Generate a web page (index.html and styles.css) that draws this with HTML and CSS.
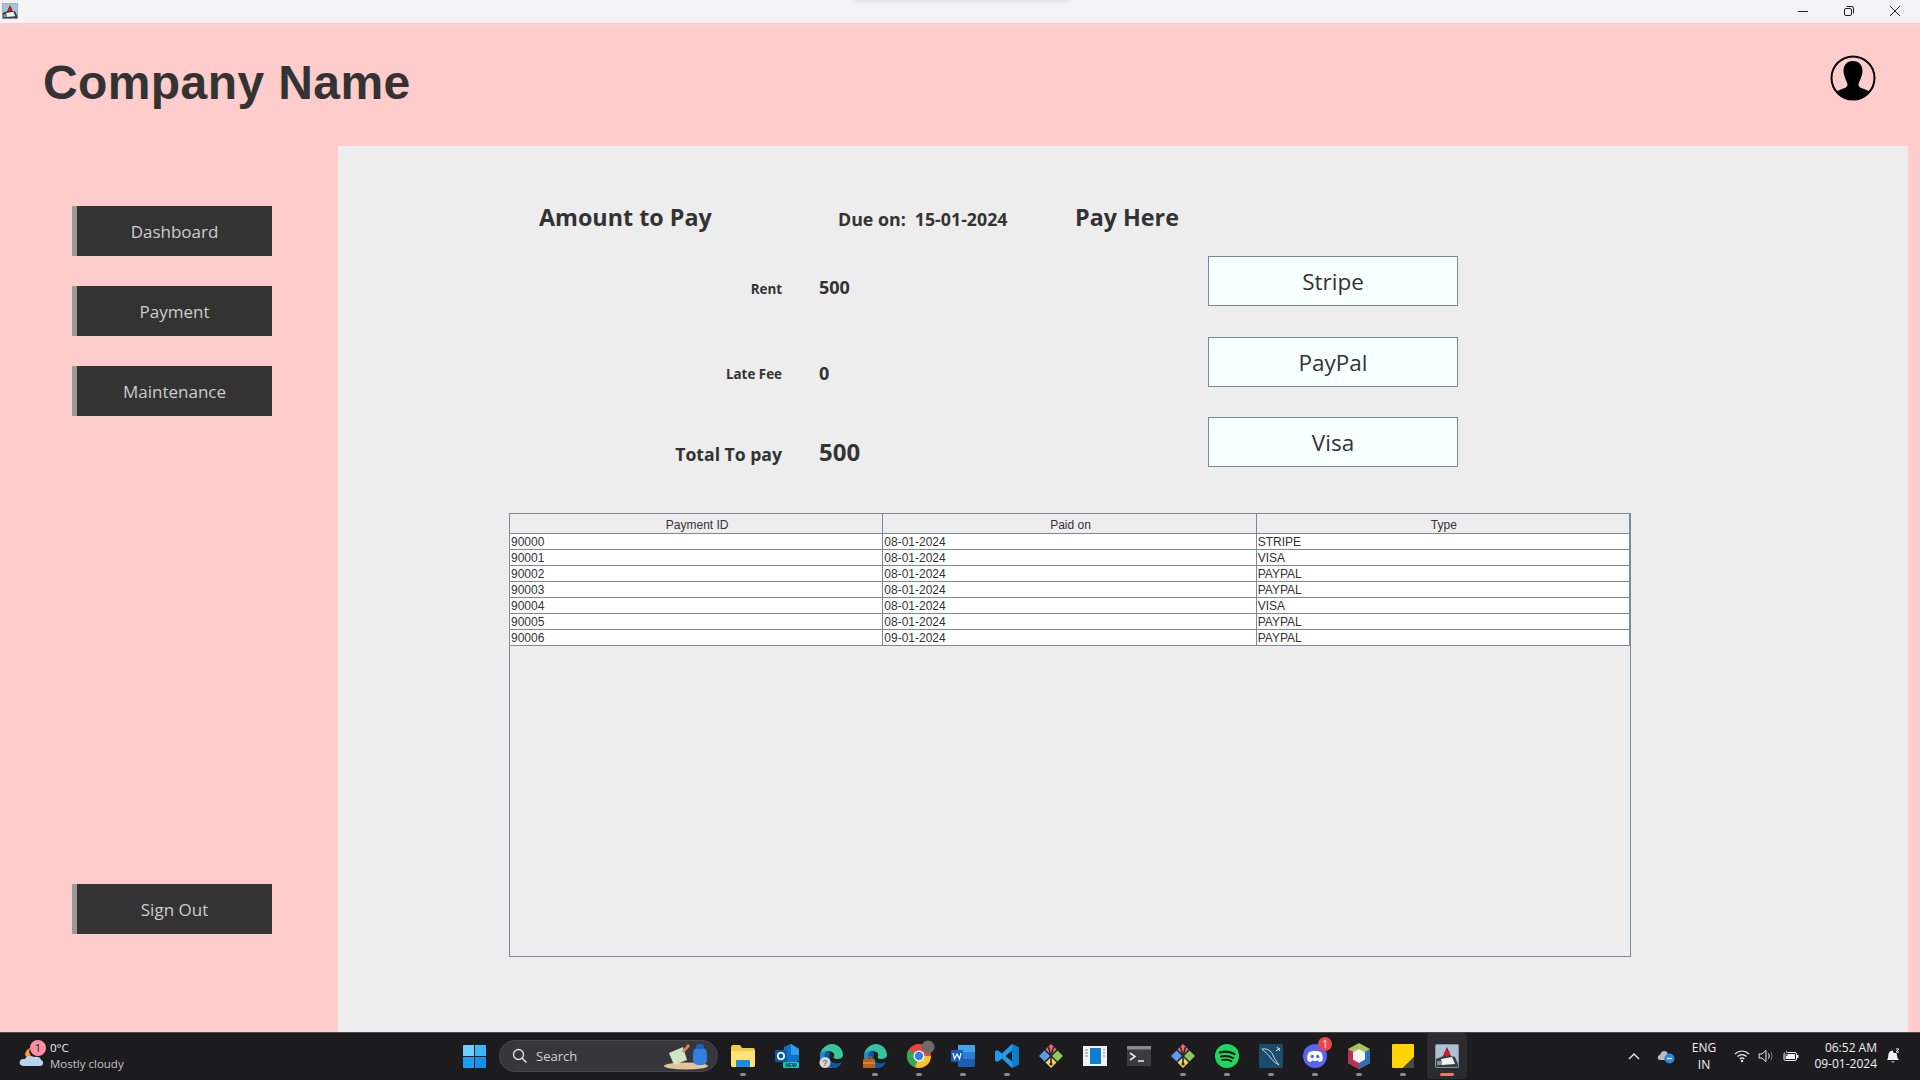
FILE: index.html
```html
<!DOCTYPE html>
<html lang="en">
<head>
    <meta charset="UTF-8">
    <meta name="viewport" content="width=device-width, initial-scale=1.0">
    <title>Company Name - Payment</title>
    <link rel="stylesheet" href="styles.css">
</head>
<body>
    <svg class="defs" width="0" height="0">
        <symbol id="duke" viewBox="0 0 24 24">
            <rect x="0.5" y="0.5" width="23" height="23" rx="1" fill="#aebfd2" stroke="#7f93a8"/>
            <path d="M8 12 L12 3 L16 12 L20 13 L23 20 L23 23 L1 23 L1 15 L6 13 Z" fill="#3a3d42"/>
            <path d="M6 15 L17 13 L20 20 L7 21 Z" fill="#eef0f2"/>
            <path d="M2 17 L7 17 L7 21 L2 21 Z" fill="#8c9198"/>
            <circle cx="12" cy="9.500" r="2.800" fill="#e8141c"/>
        </symbol>
        <symbol id="gem" viewBox="0 0 24 24">
            <path d="M5.500 6.500 L11 12 L5.500 17.500 L0 12 Z" fill="#5b9bf0"/>
            <path d="M18.500 6.500 L24 12 L18.500 17.500 L13 12 Z" fill="#8ccb5a"/>
            <path d="M12 13 L17.500 18.500 L12 24 L6.500 18.500 Z" fill="#f2d35c"/>
            <path d="M12 0 L17.500 5.500 L12 11 L6.500 5.500 Z" fill="#ee6a72"/>
            <path d="M9.500 3 L12 12 L12 20 M14.500 3 L12 12" stroke="#2b2b2b" stroke-width="1.600" fill="none"/>
            <circle cx="12" cy="20" r="1.600" fill="#2b2b2b"/>
        </symbol>
        <symbol id="edge" viewBox="0 0 24 24">
            <path d="M1 11 C2 4 8 0 13 0 C19 0 24 5 24 11 C24 14 21 15 18 15 C15 15 14 14 15 12 C16 10 14 7 9 7 C5 7 2 9 1 11 Z" fill="#35c6a0"/>
            <path d="M1 11 C2 8 6 6 9 7 C6 8 5 12 6 16 C7 20 11 23 15 24 C8 25 0 19 1 11 Z" fill="#1b8ad6"/>
            <path d="M6 13 C6 18 10 22 15 24 C18 24 21 22 23 18 C19 20 13 20 11 16 C10 13 12 9 9 7 C7 8 6 10 6 13 Z" fill="#0c59a4"/>
        </symbol>
    </svg>

    <div class="titlebar">
        <svg class="app-icon" width="16" height="16"><use href="#duke"/></svg>
        <div class="win-controls">
            <svg width="46" height="16" viewBox="0 0 46 16"><path d="M18 8.500 H28" stroke="#222" fill="none"/></svg>
            <svg width="46" height="16" viewBox="0 0 46 16"><rect x="18.500" y="5.500" width="7" height="7" rx="1.500" stroke="#222" fill="none"/><path d="M20.500 3.500 H26 Q27.500 3.500 27.500 5 V10.500" stroke="#222" fill="none"/></svg>
            <svg width="46" height="16" viewBox="0 0 46 16"><path d="M18 3 L28 13 M28 3 L18 13" stroke="#222" fill="none"/></svg>
        </div>
    </div>

    <div class="app">
        <header class="app-header">
            <h1>Company Name</h1>
            <svg class="avatar" width="46" height="46" viewBox="0 0 46 46">
                <defs><clipPath id="avatarClip"><circle cx="23" cy="23" r="21.500"/></clipPath></defs>
                <circle cx="23" cy="23" r="21.500" fill="none" stroke="#000" stroke-width="2"/>
                <path clip-path="url(#avatarClip)" d="M23 6 C29 6 32.500 10 32.500 16 C32.500 19 31.500 21 30.500 24 C29.800 26 28.500 28 28.500 30 C28.500 32 31 33 34 34 L41 37 L41 46 L5 46 L5 37 L12 34 C15 33 17.500 32 17.500 30 C17.500 28 16.200 26 15.500 24 C14.500 21 13.500 19 13.500 16 C13.500 10 17 6 23 6 Z" fill="#000"/>
            </svg>
        </header>

        <div class="app-body">
            <nav class="sidebar">
                <button class="nav-btn">Dashboard</button>
                <button class="nav-btn">Payment</button>
                <button class="nav-btn">Maintenance</button>
                <button class="nav-btn signout">Sign Out</button>
            </nav>

            <main class="panel">
                <div class="pay-head">
                    <div class="pay-title">Amount to Pay</div>
                    <div class="pay-due"><span>Due on:</span><span>15-01-2024</span></div>
                    <div class="pay-title">Pay Here</div>
                </div>

                <div class="pay-grid">
                    <div class="lbl lbl-rent">Rent</div>
                    <div class="val val-rent">500</div>
                    <button class="pay-btn">Stripe</button>

                    <div class="lbl lbl-late">Late Fee</div>
                    <div class="val val-late">0</div>
                    <button class="pay-btn">PayPal</button>

                    <div class="lbl lbl-total">Total To pay</div>
                    <div class="val val-total">500</div>
                    <button class="pay-btn">Visa</button>
                </div>

                <div class="table-box">
                    <table class="pay-table">
                        <thead>
                            <tr><th>Payment ID</th><th>Paid on</th><th>Type</th></tr>
                        </thead>
                        <tbody>
                            <tr><td>90000</td><td>08-01-2024</td><td>STRIPE</td></tr>
                            <tr><td>90001</td><td>08-01-2024</td><td>VISA</td></tr>
                            <tr><td>90002</td><td>08-01-2024</td><td>PAYPAL</td></tr>
                            <tr><td>90003</td><td>08-01-2024</td><td>PAYPAL</td></tr>
                            <tr><td>90004</td><td>08-01-2024</td><td>VISA</td></tr>
                            <tr><td>90005</td><td>08-01-2024</td><td>PAYPAL</td></tr>
                            <tr><td>90006</td><td>09-01-2024</td><td>PAYPAL</td></tr>
                        </tbody>
                    </table>
                </div>
            </main>
        </div>
    </div>

    <footer class="taskbar">
        <div class="weather">
            <div class="weather-icon">
                <svg width="26" height="26" viewBox="0 0 26 26">
                    <path d="M6 12 A8 8 0 0 0 14 15 A8 8 0 0 1 11 5 A8 8 0 0 0 6 12 Z" fill="#f2a13a"/>
                    <path d="M5 23 C1 23 0 20 1 18 C2 16 4 16 6 16 C7 13 12 12 15 14 C18 13 22 14 22 17 C25 18 25 23 21 23 Z" fill="#bcd3ee"/>
                </svg>
                <span class="weather-badge">1</span>
            </div>
            <div class="weather-text">
                <span class="temp">0°C</span>
                <span class="cond">Mostly cloudy</span>
            </div>
        </div>

        <div class="tb-slot">
            <svg width="23" height="23" viewBox="0 0 23 23">
                <path d="M0 1 Q0 0 1 0 H11 V11 H0 Z" fill="#6fd0fb"/>
                <path d="M12 0 H22 Q23 0 23 1 V11 H12 Z" fill="#3db8f6"/>
                <path d="M0 12 H11 V23 H1 Q0 23 0 22 Z" fill="#1a9ff0"/>
                <path d="M12 12 H23 V22 Q23 23 22 23 H12 Z" fill="#1291ea"/>
            </svg>
        </div>

        <div class="search">
            <svg width="16" height="16" viewBox="0 0 16 16"><circle cx="6.500" cy="6.500" r="5" stroke="#e4e4e4" stroke-width="1.300" fill="none"/><path d="M10 10 L14.500 14.500" stroke="#e4e4e4" stroke-width="1.500"/></svg>
            <span>Search</span>
            <svg class="search-art" width="46" height="28" viewBox="0 0 46 28">
                <ellipse cx="23" cy="24" rx="22" ry="3.500" fill="#e3c498"/>
                <path d="M6 11 L20 5 L24 18 L11 23 Z" fill="#cfe6c6"/>
                <path d="M19 9 L25 2 L27 4 L21 11 Z" fill="#e8834a"/>
                <rect x="30" y="6" width="14" height="17" rx="5" fill="#2f7fe0"/>
                <rect x="33" y="2" width="8" height="5" rx="2.500" fill="#1c5fb4"/>
            </svg>
        </div>

        <div class="tb-slot running">
            <svg width="24" height="22" viewBox="0 0 24 22">
                <path d="M0 2 Q0 0 2 0 H9 L11 3 H22 Q24 3 24 5 V20 Q24 22 22 22 H2 Q0 22 0 20 Z" fill="#f6c94a"/>
                <path d="M0 6 H24 V20 Q24 22 22 22 H2 Q0 22 0 20 Z" fill="#fde27a"/>
                <rect x="5" y="15" width="14" height="7" rx="1" fill="#1a8ed8"/>
            </svg>
        </div>
        <div class="tb-slot">
            <svg width="24" height="24" viewBox="0 0 24 24">
                <path d="M9 3 L16 0 L24 5 V17 L16 20 L9 17 Z" fill="#1172c8"/>
                <path d="M16 0 L24 5 V11 L16 11 Z" fill="#2aa0e8"/>
                <rect x="0" y="6" width="12" height="12" rx="1" fill="#0a5aa8"/>
                <circle cx="6" cy="12" r="3.200" fill="none" stroke="#fff" stroke-width="1.600"/>
                <rect x="8" y="18" width="16" height="6" rx="1" fill="#19c9c0"/>
                <text x="16" y="23.200" class="new-tag">NEW</text>
            </svg>
        </div>
        <div class="tb-slot">
            <svg width="24" height="24" viewBox="0 0 24 24">
                <use href="#edge" width="24" height="24"/>
                <circle cx="6" cy="18.500" r="5.500" fill="#d6d6d6"/>
                <text x="6" y="21.500" class="edge-tag">?</text>
            </svg>
        </div>
        <div class="tb-slot running">
            <svg width="24" height="24" viewBox="0 0 24 24">
                <use href="#edge" width="24" height="24"/>
                <rect x="0" y="15" width="12" height="9" rx="1" fill="#b8651c"/>
                <rect x="4" y="13" width="4" height="2.500" fill="none" stroke="#b8651c"/>
                <rect x="0" y="18.500" width="12" height="1" fill="#e8a23c"/>
            </svg>
        </div>
        <div class="tb-slot running">
            <svg width="32" height="32" viewBox="-4 4 32 32">
                <circle cx="12" cy="20" r="12" fill="#e8453c"/>
                <path d="M12 20 L24 20 A12 12 0 0 1 8 31.300 Z" fill="#f7c52b"/>
                <path d="M12 20 L8 31.300 A12 12 0 0 1 1.500 14 Z" fill="#34a853"/>
                <circle cx="12" cy="20" r="5.500" fill="#fff"/>
                <circle cx="12" cy="20" r="4.200" fill="#3b7de8"/>
                <circle cx="21" cy="11" r="6.500" fill="#6e6a66"/>
            </svg>
        </div>
        <div class="tb-slot running">
            <svg width="24" height="24" viewBox="0 0 24 24">
                <rect x="7" y="1" width="17" height="22" rx="1" fill="#1a5fb4"/>
                <rect x="7" y="1" width="17" height="7" fill="#41a5ee"/>
                <rect x="7" y="8" width="17" height="7" fill="#2b7cd3"/>
                <rect x="0" y="6" width="12" height="12" rx="1" fill="#185abd"/>
                <path d="M2 9 L3.500 15 L6 10 L8.500 15 L10 9" stroke="#fff" stroke-width="1.200" fill="none"/>
            </svg>
        </div>
        <div class="tb-slot running">
            <svg width="24" height="24" viewBox="0 0 24 24">
                <path d="M17 0 L24 3.500 V20.500 L17 24 L7 14.500 L2.500 18 L0 16.500 V7.500 L2.500 6 L7 9.500 Z M17 6.500 L10.500 12 L17 17.500 Z" fill="#1f9cf0" fill-rule="evenodd"/>
                <path d="M17 0 L24 3.500 V20.500 L17 24 Z" fill="#0e7ccb"/>
            </svg>
        </div>
        <div class="tb-slot">
            <svg width="24" height="24"><use href="#gem"/></svg>
        </div>
        <div class="tb-slot">
            <svg width="24" height="20" viewBox="0 0 24 20">
                <rect width="24" height="20" fill="#f2f2f2"/>
                <rect x="7" y="2" width="11" height="16" fill="#0e7ed0"/>
                <path d="M2 4 H5 M2 7 H5 M2 10 H5 M20 4 H22 M20 7 H22 M20 10 H22" stroke="#888"/>
            </svg>
        </div>
        <div class="tb-slot">
            <svg width="24" height="20" viewBox="0 0 24 20">
                <rect width="24" height="20" rx="1.500" fill="#3c3c3c"/>
                <rect width="24" height="3.500" fill="#8a8a8a"/>
                <path d="M3 7 L8 10.500 L3 14" stroke="#e8e8e8" stroke-width="1.600" fill="none"/>
                <path d="M11 15 H17" stroke="#e8e8e8" stroke-width="1.600"/>
            </svg>
        </div>
        <div class="tb-slot running">
            <svg width="24" height="24"><use href="#gem"/></svg>
        </div>
        <div class="tb-slot running">
            <svg width="24" height="24" viewBox="0 0 24 24">
                <circle cx="12" cy="12" r="12" fill="#1ed760"/>
                <path d="M5 8.500 C10 7 15 7.500 19.500 10" stroke="#111" stroke-width="2.300" stroke-linecap="round" fill="none"/>
                <path d="M6 12.500 C10 11.500 14.500 12 18 14" stroke="#111" stroke-width="2" stroke-linecap="round" fill="none"/>
                <path d="M7 16 C10.500 15.300 14 15.600 16.500 17.300" stroke="#111" stroke-width="1.700" stroke-linecap="round" fill="none"/>
            </svg>
        </div>
        <div class="tb-slot running">
            <svg width="24" height="24" viewBox="0 0 24 24">
                <rect width="24" height="24" rx="2" fill="#1d4b6e"/>
                <path d="M3 5 C8 4 12 7 14 11 C15 14 17 17 20 21 C16 19 13 16 11 13 C9 10 6 8 3 5 Z" fill="none" stroke="#c6d8e6" stroke-width="1"/>
                <path d="M18 3 L21 7 M17 7 L21 4" stroke="#dfe8ef"/>
            </svg>
        </div>
        <div class="tb-slot running">
            <svg width="24" height="24" viewBox="0 0 24 24">
                <circle cx="12" cy="12" r="12" fill="#5865f2"/>
                <path d="M6 8 C9 6.500 15 6.500 18 8 C20 11 20 14 19.500 16.500 C18 17.500 17 18 16 18 L15 16.500 C13 17 11 17 9 16.500 L8 18 C7 18 6 17.500 4.500 16.500 C4 14 4 11 6 8 Z" fill="#fff"/>
                <circle cx="9.300" cy="12.500" r="1.700" fill="#5865f2"/>
                <circle cx="14.700" cy="12.500" r="1.700" fill="#5865f2"/>
            </svg>
            <span class="tb-badge">1</span>
        </div>
        <div class="tb-slot running">
            <svg width="24" height="26" viewBox="0 0 24 26">
                <path d="M12 0 L23 6 V20 L12 26 L1 20 V6 Z" fill="#a8c256"/>
                <path d="M1 6 L12 12 V26 L1 20 Z" fill="#b3315c"/>
                <path d="M23 6 L12 12 V26 L23 20 Z" fill="#2d6fb8"/>
                <path d="M12 6 L18 9.500 V16.500 L12 20 L6 16.500 V9.500 Z" fill="#f4f4f0"/>
            </svg>
        </div>
        <div class="tb-slot running">
            <svg width="22" height="24" viewBox="0 0 22 24">
                <path d="M1 0 H21 Q22 0 22 1 V13 L11 24 H1 Q0 24 0 23 V1 Q0 0 1 0 Z" fill="#ffd400"/>
                <path d="M22 13 V23 Q22 24 21 24 H11 Z" fill="#4a4a4a"/>
            </svg>
        </div>
        <div class="tb-slot active">
            <svg width="24" height="24"><use href="#duke"/></svg>
        </div>

        <div class="tray">
            <svg class="tray-chevron" width="12" height="8" viewBox="0 0 12 8"><path d="M1 7 L6 2 L11 7" stroke="#eee" stroke-width="1.400" fill="none"/></svg>
            <svg class="tray-cloud" width="18" height="16" viewBox="0 0 18 16">
                <path d="M3 12 C0 12 0 7 3 7 C4 2 10 2 11 6 C14 6 14 12 11 12 Z" fill="#b8bcc2"/>
                <circle cx="12.500" cy="10.500" r="5" fill="#2a86e0"/>
                <path d="M10 10.500 H15" stroke="#fff" stroke-width="1.400"/>
            </svg>
            <div class="tray-lang"><span>ENG</span><span>IN</span></div>
            <svg class="tray-wifi" width="16" height="14" viewBox="0 0 16 14">
                <path d="M1 5 C5 1 11 1 15 5 M3.500 7.500 C6 5 10 5 12.500 7.500 M5.700 10 C7 8.800 9 8.800 10.300 10" stroke="#f0f0f0" stroke-width="1.200" fill="none"/>
                <circle cx="8" cy="12" r="1.200" fill="#f0f0f0"/>
            </svg>
            <svg class="tray-sound" width="16" height="14" viewBox="0 0 16 14">
                <path d="M1 5 H4 L8 1.500 V12.500 L4 9 H1 Z" stroke="#f0f0f0" fill="none"/>
                <path d="M10.500 4.500 Q12 7 10.500 9.500" stroke="#f0f0f0" fill="none"/>
                <path d="M13 3 Q15 7 13 11" stroke="#777" fill="none"/>
            </svg>
            <svg class="tray-battery" width="16" height="14" viewBox="0 0 16 14">
                <rect x="1" y="3.500" width="12.500" height="8" rx="1.500" stroke="#f0f0f0" fill="none"/>
                <rect x="2.500" y="5" width="9.500" height="5" fill="#f0f0f0"/>
                <rect x="14" y="6" width="1.500" height="3" fill="#f0f0f0"/>
                <path d="M4 0 L2 4 H4.500 L3.500 7" stroke="#1c1c1c" fill="#f0f0f0"/>
            </svg>
            <div class="tray-clock"><span>06:52 AM</span><span>09-01-2024</span></div>
            <svg class="tray-bell" width="16" height="16" viewBox="0 0 16 16">
                <path d="M2 12 C3.500 10 3 8 3.500 6 C4 3.500 6 2.500 8 2.500 L8 5 L11.500 5 L12.500 10 L14 12 Z" fill="#f0f0f0"/>
                <path d="M6 13.500 H10 Q8 15.500 6 13.500 Z" fill="#f0f0f0"/>
                <path d="M6 5 H9 L6 9 H9 M11 1 H14 L11 4 H14" stroke="#f0f0f0" fill="none"/>
            </svg>
        </div>
    </footer>
</body>
</html>
```

FILE: styles.css
```css
* {
    box-sizing: border-box;
}
html, body {
    margin: 0;
    height: 100%;
}
body {
    display: flex;
    flex-direction: column;
    width: 1920px;
    height: 1080px;
    overflow: hidden;
    font-family: "Open Sans", "Noto Sans", sans-serif;
    color: #333;
}
.defs {
    display: none;
}

/* window chrome */
.titlebar {
    position: relative;
    display: flex;
    align-items: center;
    justify-content: space-between;
    height: 23px;
    padding: 0 2px 2px 2px;
    background-color: #f3f3f5;
}
.titlebar::before {
    content: "";
    position: absolute;
    top: -3px;
    left: 855px;
    width: 215px;
    height: 4px;
    background-color: #dcdcda;
    filter: blur(2px);
}
.app-icon {
    display: block;
}
.win-controls {
    display: flex;
    gap: 0;
}
.win-controls svg {
    display: block;
}

/* app */
.app {
    flex: 1;
    display: flex;
    flex-direction: column;
    min-height: 0;
    background-color: #ffcccc;
}
.app-header {
    display: flex;
    align-items: flex-start;
    justify-content: space-between;
    height: 123px;
    padding: 32px 44px 0 43px;
}
.app-header h1 {
    margin: 0;
    font-family: "Liberation Sans", Arial, sans-serif;
    font-size: 48px;
    line-height: 55px;
    font-weight: bold;
    letter-spacing: 0.4px;
    color: #333;
}
.app-body {
    flex: 1;
    display: flex;
    min-height: 0;
    padding-right: 12px;
}
.sidebar {
    display: flex;
    flex-direction: column;
    gap: 30px;
    width: 338px;
    padding: 60px 66px 98px 72px;
}
.nav-btn {
    height: 50px;
    padding: 1px 0 0;
    border: 0;
    border-left: 5px solid #999;
    background-color: #333;
    color: #ccc;
    font-family: "Open Sans", "Noto Sans", sans-serif;
    font-size: 17px;
}
.signout {
    margin-top: auto;
}
.panel {
    flex: 1;
    padding: 51px 0 0 201px;
    background-color: #ededed;
}
.pay-head {
    display: flex;
    align-items: baseline;
    height: 59px;
}
.pay-title {
    font-size: 23.3px;
    line-height: 40px;
    font-weight: bold;
}
.pay-head .pay-title:first-child {
    width: 299px;
}
.pay-due {
    display: flex;
    gap: 9px;
    width: 237px;
    font-size: 17.8px;
    font-weight: bold;
}

.pay-grid {
    display: grid;
    grid-template-columns: 243px 426px 250px;
    grid-template-rows: 81px 80px 50px;
}
.lbl {
    text-align: right;
    font-weight: bold;
    font-size: 13.4px;
    line-height: 20px;
}
.val {
    padding-left: 37px;
    font-weight: bold;
    font-size: 18px;
    line-height: 24px;
}
.lbl-rent { margin-top: 23px; }
.val-rent { margin-top: 19px; }
.lbl-late { margin-top: 27px; }
.val-late { margin-top: 24px; }
.lbl-total { margin-top: 25px; font-size: 17.6px; line-height: 24px; }
.val-total { margin-top: 19px; font-size: 24px; line-height: 32px; }
.pay-btn {
    height: 50px;
    padding: 0;
    border: 1px solid #7a8a9e;
    background-color: #f8ffff;
    color: #333;
    font-family: "Open Sans", "Noto Sans", sans-serif;
    font-size: 22.5px;
}

/* payments table */
.table-box {
    width: 1122px;
    height: 444px;
    margin: 46px 0 0 -30px;
    border: 1px solid #7a8a99;
    background-color: #ededed;
}
.pay-table {
    table-layout: fixed;
    width: 1120px;
    border-collapse: separate;
    border-spacing: 0;
    font-family: "Liberation Sans", Arial, sans-serif;
    font-size: 12px;
    color: #333;
}
.pay-table th,
.pay-table td {
    border-right: 1px solid #7a8a99;
    border-bottom: 1px solid #7a8a99;
}
.pay-table th {
    height: 20px;
    padding: 3px 0 0 2px;
    line-height: 15px;
    font-weight: normal;
    text-align: center;
    background-color: #ededed;
}
.pay-table td {
    height: 16px;
    padding: 1px 0 0 1px;
    line-height: 14px;
    background-color: #fff;
}

/* windows taskbar */
.taskbar {
    display: flex;
    align-items: center;
    height: 48px;
    padding-bottom: 1px;
    border-top: 1px solid #4a4a4a;
    background-color: #1c1c1f;
    color: #f0f0f0;
}
.weather {
    display: flex;
    align-items: center;
    gap: 7px;
    width: 452px;
    padding-left: 19px;
}
.weather-icon {
    position: relative;
    width: 24px;
    height: 26px;
}
.weather-badge {
    position: absolute;
    top: -3px;
    left: 11px;
    width: 16px;
    height: 16px;
    border-radius: 50%;
    background-color: #ff8fa3;
    color: #222;
    font-size: 11px;
    line-height: 16px;
    text-align: center;
}
.weather-text {
    display: flex;
    flex-direction: column;
    font-size: 11.5px;
    line-height: 16px;
}
.cond {
    color: #c4c4c4;
}
.tb-slot {
    position: relative;
    flex: 0 0 44px;
    display: flex;
    align-items: center;
    justify-content: center;
    height: 40px;
}
.tb-slot svg {
    display: block;
}
.tb-slot.running::after {
    content: "";
    position: absolute;
    bottom: 0;
    left: 19px;
    width: 6px;
    height: 3px;
    border-radius: 2px;
    background-color: #8e8e8e;
}
.tb-slot.active::before {
    content: "";
    position: absolute;
    top: -3px;
    bottom: -3px;
    left: 2px;
    right: 2px;
    border-radius: 4px;
    background-color: #2c2c30;
}
.tb-slot.active svg {
    position: relative;
}
.tb-slot.active::after {
    content: "";
    position: absolute;
    bottom: 0;
    left: 15px;
    width: 14px;
    height: 3px;
    border-radius: 2px;
    background-color: #f0785a;
}
.tb-badge {
    position: absolute;
    top: 1px;
    right: 5px;
    width: 14px;
    height: 14px;
    border-radius: 50%;
    background-color: #e8484c;
    color: #fff;
    font-size: 10px;
    line-height: 14px;
    text-align: center;
}
.new-tag {
    font-family: "Liberation Sans", Arial, sans-serif;
    font-size: 5px;
    font-weight: bold;
    fill: #10302e;
    text-anchor: middle;
}
.edge-tag {
    font-family: "Liberation Sans", Arial, sans-serif;
    font-size: 9px;
    font-weight: bold;
    fill: #777;
    text-anchor: middle;
}
.search {
    display: flex;
    align-items: center;
    flex: 0 0 219px;
    height: 32px;
    margin: 0 3px;
    padding: 0 8px 0 12px;
    border: 1px solid #48484c;
    border-radius: 16px;
    background-color: #37373b;
    color: #d0d0d0;
    font-size: 13px;
}
.search span {
    margin-left: 8px;
}
.search-art {
    margin-left: auto;
}
.tray {
    display: flex;
    align-items: center;
    margin-left: auto;
    width: 293px;
    padding-left: 1px;
    font-size: 12px;
}
.tray-chevron { margin-left: 0; }
.tray-cloud { margin-left: 17px; }
.tray-lang {
    display: flex;
    flex-direction: column;
    align-items: center;
    width: 40px;
    margin-left: 9px;
    line-height: 17px;
}
.tray-wifi { margin-left: 10px; }
.tray-sound { margin-left: 8px; }
.tray-battery { margin-left: 9px; }
.tray-clock {
    display: flex;
    flex-direction: column;
    align-items: flex-end;
    width: 71px;
    margin-left: 7px;
    line-height: 16px;
}
.tray-bell { margin-left: 8px; }
```
